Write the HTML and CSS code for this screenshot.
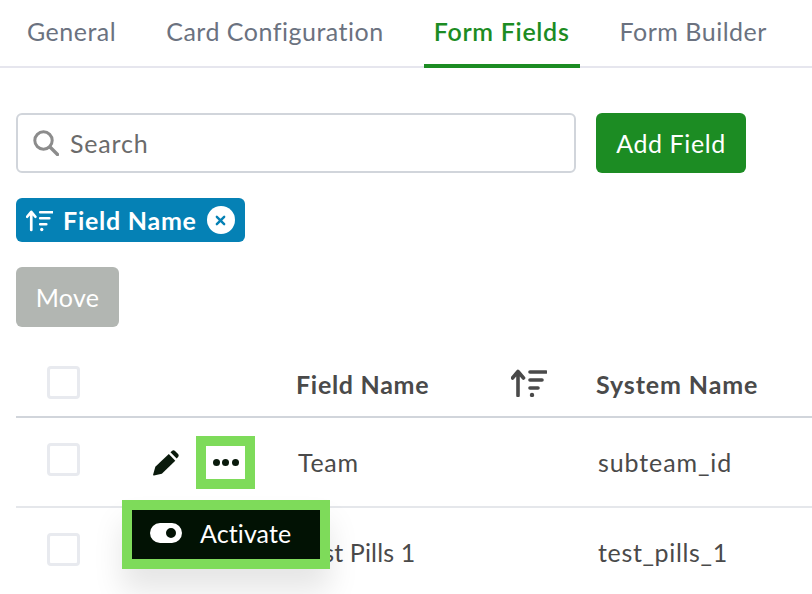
FILE: index.html
```html
<!DOCTYPE html>
<html lang="en">
<head>
<meta charset="utf-8">
<title>Form Fields</title>
<link rel="stylesheet" href="styles.css">
</head>
<body>
<nav class="tabs">
  <a class="tab">General</a>
  <a class="tab">Card Configuration</a>
  <a class="tab tab-active">Form Fields</a>
  <a class="tab">Form Builder</a>
</nav>
<main class="content">
  <div class="toolbar">
    <label class="search">
      <svg class="search-icon" viewBox="0 0 26 26" aria-hidden="true"><circle cx="10.5" cy="10.5" r="8.7" fill="none" stroke="currentColor" stroke-width="3"/><path d="M17 17l7.5 7.5" stroke="currentColor" stroke-width="3.4" stroke-linecap="round"/></svg>
      <span class="search-text">Search</span>
    </label>
    <button class="btn btn-primary">Add Field</button>
  </div>
  <div class="chips">
    <span class="chip">
      <svg class="sort-icon sort-chip" viewBox="0 0 36 28" aria-hidden="true"><path d="M7 26.5V3M1.5 9L7 2.5 12.5 9" fill="none" stroke="currentColor" stroke-width="3.6" stroke-linecap="round" stroke-linejoin="round"/><path d="M19 3h16M19 11h12M19 19h8" stroke="currentColor" stroke-width="3.6" stroke-linecap="round"/><circle cx="21" cy="26" r="2.2" fill="currentColor"/></svg>
      <span class="chip-label">Field Name</span>
      <span class="chip-close"><svg viewBox="0 0 12 12" aria-hidden="true"><path d="M2 2l8 8M10 2l-8 8" stroke="currentColor" stroke-width="2.6" stroke-linecap="round"/></svg></span>
    </span>
  </div>
  <button class="btn btn-disabled">Move</button>
  <section class="table">
    <div class="row row-head">
      <span class="cell-check"><span class="checkbox"></span></span>
      <span class="cell-actions"></span>
      <span class="cell-name head-name">Field Name
        <svg class="sort-icon sort-head" viewBox="0 0 36 28" aria-hidden="true"><path d="M7 26.5V3M1.5 9L7 2.5 12.5 9" fill="none" stroke="currentColor" stroke-width="3.6" stroke-linecap="round" stroke-linejoin="round"/><path d="M19 3h16M19 11h12M19 19h8" stroke="currentColor" stroke-width="3.6" stroke-linecap="round"/><circle cx="21" cy="26" r="2.2" fill="currentColor"/></svg>
      </span>
      <span class="cell-system">System Name</span>
    </div>
    <div class="row row-body">
      <span class="cell-check"><span class="checkbox"></span></span>
      <span class="cell-actions">
        <svg class="pencil" viewBox="0 0 28 28" aria-hidden="true"><path d="M1 27.5c-.6.1-1-.3-.9-.9L2.500 18 17 4.200 24 11.500 9.500 25.500z"/><path d="M18.800 2.500l1.600-1.500c1-.9 2.400-.9 3.300 0l3.300 3.300c.9 1 .9 2.400 0 3.300l-1.500 1.600z"/></svg>
        <span class="more"><span class="dot"></span><span class="dot"></span><span class="dot"></span></span>
      </span>
      <span class="cell-name">Team</span>
      <span class="cell-system">subteam_id</span>
      <div class="menu">
        <svg class="toggle" viewBox="0 0 32 20" aria-hidden="true"><path fill-rule="evenodd" d="M10 0h12a10 10 0 0 1 0 20H10A10 10 0 0 1 10 0zm11 5a5 5 0 1 0 0 10 5 5 0 0 0 0-10z"/></svg>
        <span>Activate</span>
      </div>
    </div>
    <div class="row row-body row-tight">
      <span class="cell-check"><span class="checkbox"></span></span>
      <span class="cell-actions"></span>
      <span class="cell-name">Test Pills 1</span>
      <span class="cell-system">test_pills_1</span>
    </div>
  </section>
</main>
</body>
</html>
```
FILE: styles.css
```css
* { box-sizing: border-box; }
html, body { height: 100%; }
body {
  margin: 0;
  overflow: hidden;
  background: #fff;
  font-family: Lato, "Liberation Sans", sans-serif;
  font-size: 25px;
  letter-spacing: 0.5px;
  color: #4a4a4a;
}
.tabs {
  display: flex;
  gap: 30px;
  height: 68px;
  padding-left: 17px;
  border-bottom: 2px solid #e6e6ee;
}
.tab {
  height: 68px;
  padding: 0 10px;
  line-height: 62px;
  color: #6b7280;
  white-space: nowrap;
}
.tab-active {
  color: #1c8c23;
  font-weight: 600;
  letter-spacing: 0.7px;
  border-bottom: 4px solid #1c8c23;
}
.content { padding: 45px 0 0 16px; }
.toolbar { display: flex; gap: 20px; height: 60px; }
.search {
  width: 560px;
  display: flex;
  align-items: center;
  gap: 11px;
  padding-left: 15px;
  border: 2px solid #d1d5db;
  border-radius: 6px;
  color: #6b6b6b;
  letter-spacing: 0.8px;
}
.search-icon { width: 26px; height: 26px; color: #8c8c8c; }
.btn {
  display: block;
  height: 60px;
  border: 0;
  border-radius: 6px;
  color: #fff;
  font: inherit;
  letter-spacing: inherit;
}
.btn-primary { width: 150px; background: #1c8c23; letter-spacing: 0.6px; }
.btn-disabled { width: 103px; background: #b2b6b2; letter-spacing: 0.3px; }
.chips { display: flex; margin: 25px 0; }
.chip {
  display: flex;
  align-items: center;
  width: 229px;
  height: 44px;
  padding-left: 10px;
  border-radius: 6px;
  background: #0581b5;
  color: #fff;
}
.chip-label { margin-left: 10px; font-weight: 700; white-space: nowrap; letter-spacing: 0.75px; }
.sort-icon { display: block; }
.sort-chip { width: 27px; height: 23px; }
.chip-close {
  display: flex;
  align-items: center;
  justify-content: center;
  width: 28px;
  height: 28px;
  margin-left: 10px;
  border-radius: 50%;
  background: #fff;
  color: #0581b5;
}
.chip-close svg { width: 11px; height: 11px; }
.row {
  position: relative;
  display: grid;
  grid-template-columns: 136px 145px 299px 1fr;
  align-items: center;
  height: 90px;
  border-bottom: 2px solid #e5e7eb;
}
.row-head {
  height: 91px;
  border-bottom-color: #d1d5db;
  font-weight: 700;
  padding-top: 24px;
}
.cell-check { padding: 0 0 6px 31px; }
.row-head .cell-check { padding-bottom: 2px; }
.checkbox {
  display: block;
  width: 33px;
  height: 33px;
  border: 3px solid #e8eaef;
  border-radius: 4px;
}
.cell-actions { display: flex; align-items: center; gap: 17px; padding-left: 1px; }
.pencil { width: 26px; height: 26px; margin-top: 2px; fill: #0a1a0c; }
.more {
  display: flex;
  align-items: center;
  justify-content: center;
  gap: 2.500px;
  width: 59px;
  height: 53px;
  background: #fff;
  border: 10px solid #7edb5a;
}
.dot { width: 7px; height: 7px; border-radius: 50%; background: #0a1a0c; }
.cell-name { white-space: nowrap; }
.cell-system { white-space: nowrap; }
.row-body .cell-name { padding-left: 1px; letter-spacing: 0.7px; }
.row-body .cell-system { padding-left: 2px; letter-spacing: 0.9px; }
.row-tight .cell-name { letter-spacing: 0.15px; }
.row-tight .cell-system { letter-spacing: 0.65px; }
.row-head .cell-system { letter-spacing: 0.9px; }
.head-name { display: flex; align-items: center; gap: 82px; margin-left: -1px; letter-spacing: 0.7px; }
.sort-head { width: 36px; height: 28px; margin-top: -2px; }
.menu {
  position: absolute;
  left: 106px;
  top: 82px;
  z-index: 2;
  display: flex;
  align-items: center;
  gap: 18px;
  width: 208px;
  height: 69px;
  padding: 0 0 4px 18px;
  background: #021204;
  border: 10px solid #7edb5a;
  color: #fff;
  letter-spacing: 0.1px;
  box-shadow: 0 22px 30px rgba(0,0,0,.1);
}
.toggle { width: 32px; height: 20px; fill: #fff; }
```
